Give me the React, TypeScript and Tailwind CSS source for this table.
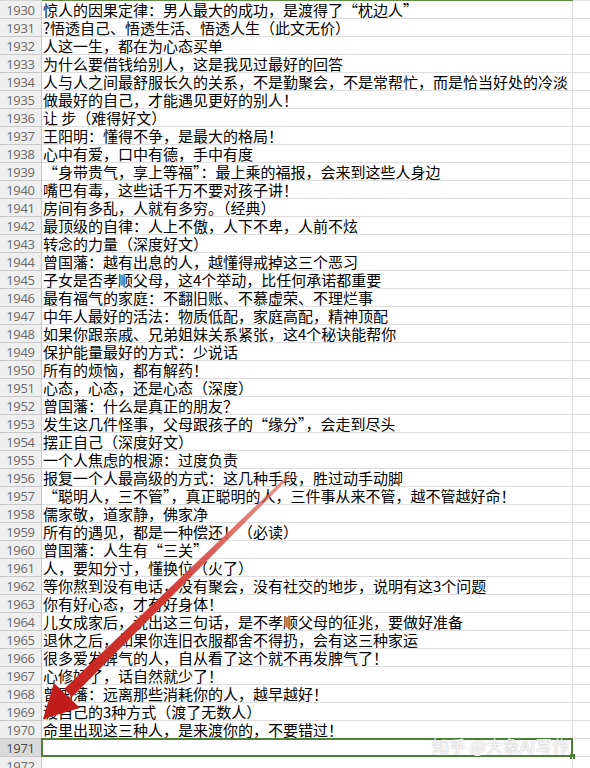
const rows: [number, string][] = [
  [1930, '惊人的因果定律：男人最大的成功，是渡得了“枕边人”'],
  [1931, '?悟透自己、悟透生活、悟透人生（此文无价）'],
  [1932, '人这一生，都在为心态买单'],
  [1933, '为什么要借钱给别人，这是我见过最好的回答'],
  [1934, '人与人之间最舒服长久的关系，不是勤聚会，不是常帮忙，而是恰当好处的冷淡'],
  [1935, '做最好的自己，才能遇见更好的别人！'],
  [1936, '让 步（难得好文）'],
  [1937, '王阳明：懂得不争，是最大的格局！'],
  [1938, '心中有爱，口中有德，手中有度'],
  [1939, '“身带贵气，享上等福”：最上乘的福报，会来到这些人身边'],
  [1940, '嘴巴有毒，这些话千万不要对孩子讲！'],
  [1941, '房间有多乱，人就有多穷。（经典）'],
  [1942, '最顶级的自律：人上不傲，人下不卑，人前不炫'],
  [1943, '转念的力量（深度好文）'],
  [1944, '曾国藩：越有出息的人，越懂得戒掉这三个恶习'],
  [1945, '子女是否孝顺父母，这4个举动，比任何承诺都重要'],
  [1946, '最有福气的家庭：不翻旧账、不慕虚荣、不理烂事'],
  [1947, '中年人最好的活法：物质低配，家庭高配，精神顶配'],
  [1948, '如果你跟亲戚、兄弟姐妹关系紧张，这4个秘诀能帮你'],
  [1949, '保护能量最好的方式：少说话'],
  [1950, '所有的烦恼，都有解药！'],
  [1951, '心态，心态，还是心态（深度）'],
  [1952, '曾国藩：什么是真正的朋友？'],
  [1953, '发生这几件怪事，父母跟孩子的“缘分”，会走到尽头'],
  [1954, '摆正自己（深度好文）'],
  [1955, '一个人焦虑的根源：过度负责'],
  [1956, '报复一个人最高级的方式：这几种手段，胜过动手动脚'],
  [1957, '“聪明人，三不管”，真正聪明的人，三件事从来不管，越不管越好命！'],
  [1958, '儒家敬，道家静，佛家净'],
  [1959, '所有的遇见，都是一种偿还！（必读）'],
  [1960, '曾国藩：人生有“三关”'],
  [1961, '人，要知分寸，懂换位（火了）'],
  [1962, '等你熬到没有电话，没有聚会，没有社交的地步，说明有这3个问题'],
  [1963, '你有好心态，才有好身体！'],
  [1964, '儿女成家后，说出这三句话，是不孝顺父母的征兆，要做好准备'],
  [1965, '退休之后，如果你连旧衣服都舍不得扔，会有这三种家运'],
  [1966, '很多爱发脾气的人，自从看了这个就不再发脾气了！'],
  [1967, '心修好了，话自然就少了！'],
  [1968, '曾国藩：远离那些消耗你的人，越早越好！'],
  [1969, '渡自己的3种方式（渡了无数人）'],
  [1970, '命里出现这三种人，是来渡你的，不要错过！'],
  [1971, ''],
  [1972, ''],
]

export default function App() {
  return (
    <div
      className="relative w-[590px] h-[768px] overflow-hidden bg-white"
      style={{ fontFamily: '"Noto Sans CJK SC", "Noto Sans", sans-serif' }}
      lang="zh-CN"
    >
      {/* top edge of previous row */}
      <div className="flex h-px">
        <div className="w-[42px] bg-[#d4d4d4]" />
        <div className="w-[531px] bg-[#5f8f45]" />
        <div className="flex-1 bg-[#e2e2e2]" />
      </div>

      {rows.map(([n, text]) => {
        const selected = n === 1971
        return (
          <div key={n} className="flex h-[18px]">
            <div
              className={`w-[42px] shrink-0 border-b border-r border-[#c8c8c8] flex items-center justify-center text-[13px] leading-[16px] tracking-[-0.3px] ${
                selected ? 'bg-[#d9d9d9] text-[#4a4a4a]' : 'bg-[#efefef] text-[#6a6a6a]'
              }`}
              style={{ fontFamily: '"Open Sans", "Liberation Sans", sans-serif' }}
            >
              {n}
            </div>
            <div className="relative w-[531px] shrink-0 border-b border-r border-[#dedede] pl-[1px] text-[15px] leading-[17px] text-black whitespace-nowrap">
              {text}
              {selected && (
                <>
                  <div className="absolute -left-px -top-px right-[-1px] bottom-[-1px] border-2 border-[#4f7f36]" />
                  <div className="absolute right-[-3px] bottom-[-3px] w-[5px] h-[5px] bg-[#4f7f36]" />
                </>
              )}
            </div>
            <div className="flex-1 border-b border-[#dedede]" />
          </div>
        )
      })}

      {/* annotation arrow */}
      <svg className="absolute left-0 top-0 pointer-events-none" width="590" height="768">
        <defs>
          <linearGradient id="arr" x1="288" y1="476" x2="44" y2="718" gradientUnits="userSpaceOnUse">
            <stop offset="0" stopColor="#e26a60" stopOpacity="0.7" />
            <stop offset="0.5" stopColor="#d33a33" />
            <stop offset="1" stopColor="#c21d1a" />
          </linearGradient>
        </defs>
        <polygon points="288,475 290,477 72,697 64,689" fill="url(#arr)" />
        <polygon points="43,719 54,683 80,708" fill="#c21d1a" />
      </svg>

      {/* watermark */}
      <div
        className="absolute left-[432px] top-[735px] text-[17px] leading-[22px] text-white/85 whitespace-nowrap"
        style={{ textShadow: '0 0 2px rgba(0,0,0,0.35)' }}
      >
        知乎 @大象AI写作
      </div>
    </div>
  )
}
